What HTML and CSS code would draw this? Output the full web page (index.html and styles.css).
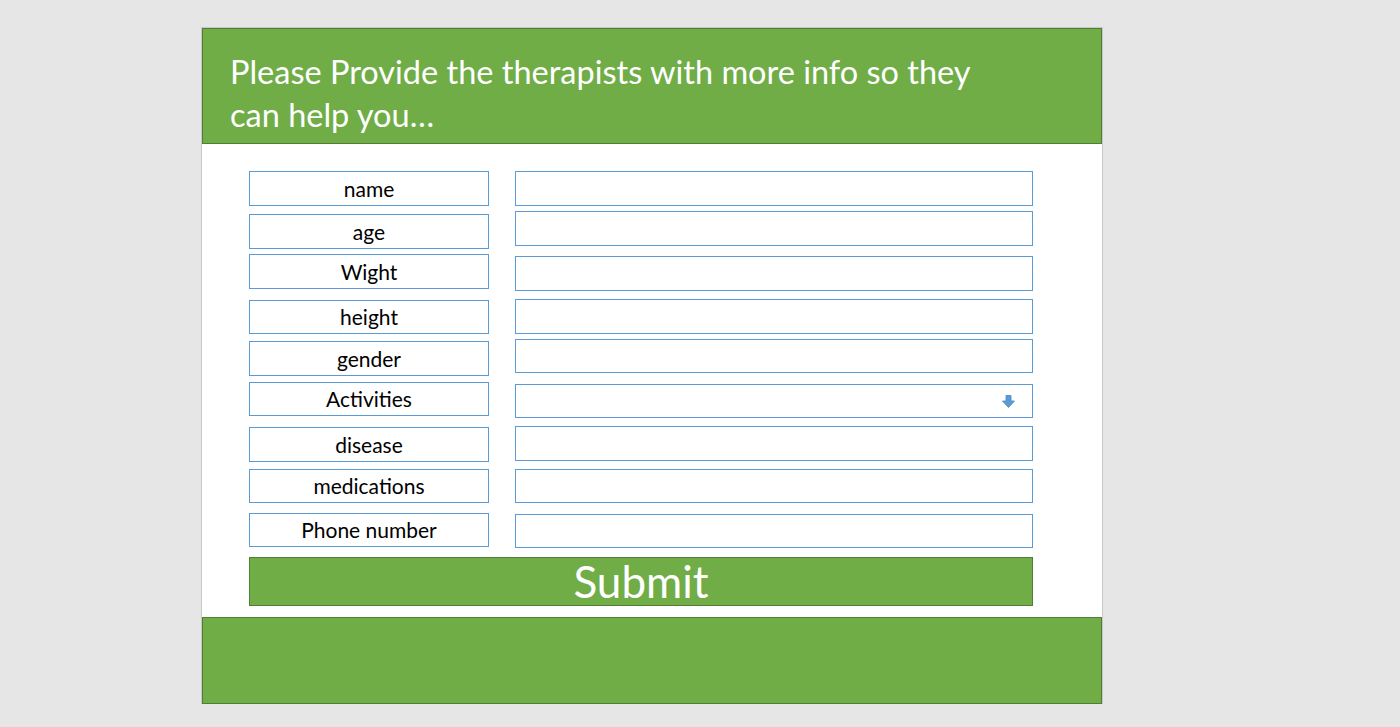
FILE: index.html
```html
<!DOCTYPE html>
<html lang="en">
<head>
<meta charset="utf-8">
<title>Therapist info</title>
<link rel="stylesheet" href="styles.css">
</head>
<body>
<div class="slide">
  <div class="header">
    <h1 class="title">Please Provide the therapists with more info so they<br>can help you…</h1>
  </div>
  <div class="form">
    <div class="fields">
      <div class="labels">
        <div class="label">name</div>
        <div class="label">age</div>
        <div class="label">Wight</div>
        <div class="label">height</div>
        <div class="label">gender</div>
        <div class="label">Activities</div>
        <div class="label">disease</div>
        <div class="label">medications</div>
        <div class="label">Phone number</div>
      </div>
      <div class="inputs">
        <div class="input"></div>
        <div class="input"></div>
        <div class="input"></div>
        <div class="input"></div>
        <div class="input"></div>
        <div class="input select">
          <svg class="arrow" width="13" height="13" viewBox="0 0 13 13">
            <path d="M4 0.5 H9 V6 H12.5 L6.5 12.5 L0.5 6 H4 Z" fill="#5b9bd5" stroke="#4a86c0" stroke-width="0.8"/>
          </svg>
        </div>
        <div class="input"></div>
        <div class="input"></div>
        <div class="input"></div>
      </div>
    </div>
    <div class="submit">Submit</div>
  </div>
  <div class="footer"></div>
</div>
</body>
</html>
```

FILE: styles.css
```css
html, body {
  margin: 0;
  padding: 0;
}
body {
  background: #e6e6e6;
  font-family: Lato, "Open Sans", sans-serif;
  height: 727px;
  overflow: hidden;
}
.slide {
  margin: 27px 0 0 201px;
  width: 900px;
  height: 676px;
  background: #ffffff;
  border: 1px solid #c8c8c8;
  border-bottom: none;
  display: flex;
  flex-direction: column;
}
.header {
  box-sizing: border-box;
  height: 116px;
  flex: none;
  background: #70ad47;
  border: 1px solid #507e32;
  padding: 21px 0 0 27px;
}
.title {
  margin: 0;
  color: #ffffff;
  font-weight: 400;
  font-size: 32.5px;
  line-height: 43px;
  white-space: nowrap;
}
.form {
  padding: 27px 0 0 47px;
}
.fields {
  display: flex;
  gap: 26px;
}
.labels, .inputs {
  display: flex;
  flex-direction: column;
}
.label, .input {
  box-sizing: border-box;
  height: 35px;
  border: 1px solid #5b9bd5;
  background: #ffffff;
}
.label {
  width: 240px;
  display: flex;
  align-items: center;
  justify-content: center;
  font-size: 21px;
  color: #000000;
  padding-bottom: 1px;
}
.label:nth-child(2) { margin-top: 8px; }
.label:nth-child(3) { margin-top: 5px; }
.label:nth-child(4) { margin-top: 11px; height: 34px; }
.label:nth-child(5) { margin-top: 7px; }
.label:nth-child(6) { margin-top: 6px; height: 34px; }
.label:nth-child(7) { margin-top: 11px; }
.label:nth-child(8) { margin-top: 7px; height: 34px; }
.label:nth-child(9) { margin-top: 10px; height: 34px; }

.input {
  width: 518px;
}
.input:nth-child(2) { margin-top: 5px; }
.input:nth-child(3) { margin-top: 10px; }
.input:nth-child(4) { margin-top: 8px; }
.input:nth-child(5) { margin-top: 5px; height: 34px; }
.input:nth-child(6) { margin-top: 11px; height: 34px; }
.input:nth-child(7) { margin-top: 8px; }
.input:nth-child(8) { margin-top: 8px; height: 34px; }
.input:nth-child(9) { margin-top: 11px; height: 34px; }

.select {
  display: flex;
  align-items: center;
  justify-content: flex-end;
  padding-right: 17px;
}
.arrow {
  display: block;
}
.submit {
  box-sizing: border-box;
  margin-top: 9px;
  width: 784px;
  height: 49px;
  background: #70ad47;
  border: 1px solid #507e32;
  color: #ffffff;
  font-size: 44px;
  line-height: 47px;
  text-align: center;
}
.footer {
  box-sizing: border-box;
  flex: none;
  margin-top: 11px;
  height: 87px;
  background: #70ad47;
  border: 1px solid #507e32;
}
```
